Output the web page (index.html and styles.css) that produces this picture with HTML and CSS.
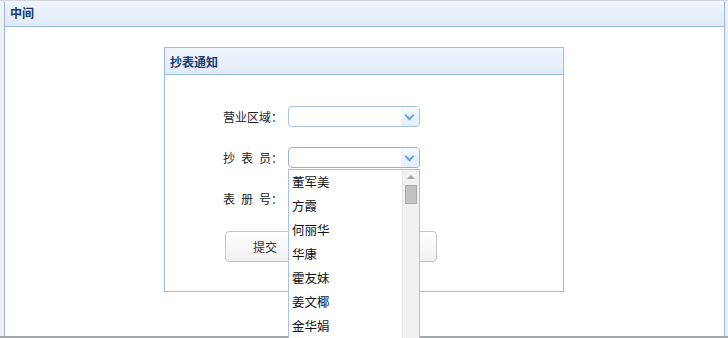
FILE: index.html
```html
<!DOCTYPE html>
<html lang="zh-CN">
  <head>
    <meta charset="UTF-8" />
    <title>中间 - 抄表通知</title>
    <link rel="stylesheet" href="styles.css">
  </head>
  <body>
    <div class="frame">
      <div class="panel outer-panel">
        <div class="panel-header">中间</div>
        <div class="panel-body">
          <div class="panel notice-panel">
            <div class="panel-header">抄表通知</div>
            <form class="notice-form">
              <div class="form-row">
                <label class="form-label">营业区域：</label>
                <div class="combo">
                  <span class="combo-trigger"></span>
                </div>
              </div>

              <div class="form-row">
                <label class="form-label"><span class="spread">抄表</span>员：</label>
                <div class="combo combo-open">
                  <span class="combo-trigger"></span>
                  <ul class="combo-list">
                    <li>董军美</li>
                    <li>方霞</li>
                    <li>何丽华</li>
                    <li>华康</li>
                    <li>霍友妹</li>
                    <li>姜文椰</li>
                    <li>金华娟</li>
                  </ul>
                  <div class="scrollbar">
                    <span class="scroll-up"></span>
                    <span class="scroll-thumb"></span>
                  </div>
                </div>
              </div>

              <div class="form-row">
                <label class="form-label"><span class="spread">表册</span>号：</label>
                <div class="combo">
                  <span class="combo-trigger"></span>
                </div>
              </div>

              <div class="form-buttons">
                <button type="button" class="btn">提交</button>
                <button type="button" class="btn">重置</button>
              </div>
            </form>
          </div>
        </div>
      </div>
    </div>
  </body>
</html>
```

FILE: styles.css
```css
* {
  margin: 0;
  padding: 0;
  box-sizing: border-box;
}

html,
body {
  height: 100%;
  overflow: hidden;
}

body {
  font-family: "Noto Sans CJK SC", "Liberation Sans", sans-serif;
  font-size: 12px;
  color: #222;
  background: #ffffff;
}

.frame {
  height: 100%;
  padding: 0 3px 0 4px;
  background: #eef0f3;
  border-top: 1px solid #d3d7dc;
  border-bottom: 2px solid #a4a8ad;
}

.panel {
  background: #ffffff;
  border: 1px solid #99bbe8;
}

.outer-panel {
  height: 100%;
  border-top: none;
  border-bottom: none;
}

.panel-header {
  height: 26px;
  line-height: 25px;
  padding-left: 5px;
  font-size: 12px;
  font-weight: 700;
  color: #163a75;
  background: linear-gradient(to bottom, #f0f5fc 0%, #e0eaf8 100%);
  border-bottom: 1px solid #99bbe8;
}

.outer-panel > .panel-header {
  height: 26px;
  line-height: 24px;
}

.panel-body {
  padding-top: 20px;
}

/* inner notice panel */
.notice-panel {
  width: 400px;
  margin-left: 159px;
}

.notice-panel > .panel-header {
  height: 27px;
  line-height: 27px;
}

.notice-form {
  height: 216px;
  padding-top: 31px;
}

.form-row {
  display: flex;
  align-items: center;
  height: 21px;
  margin-bottom: 20px;
}

.form-label {
  width: 123px;
  padding-right: 5px;
  text-align: right;
  font-size: 12px;
  color: #222;
}

.spread {
  letter-spacing: 6px;
}

.combo {
  position: relative;
  width: 132px;
  height: 21px;
  border: 1px solid #a5c2e2;
  border-radius: 4px;
  background: #ffffff;
}

.combo-trigger {
  position: absolute;
  top: 0;
  right: 0;
  width: 18px;
  height: 100%;
  border-radius: 0 3px 3px 0;
  background: linear-gradient(to bottom, #f4f8fd 0%, #e2edf9 100%);
}

.combo-trigger::after {
  content: "";
  position: absolute;
  left: 5px;
  top: 5px;
  width: 5px;
  height: 5px;
  border-right: 2px solid #6aa6dc;
  border-bottom: 2px solid #6aa6dc;
  transform: rotate(45deg);
}

.combo-open {
  border-color: #8fb3dd;
}

/* open dropdown */
.combo-list {
  position: absolute;
  top: 21px;
  left: -1px;
  width: 132px;
  height: 170px;
  list-style: none;
  background: #ffffff;
  border: 1px solid #a5c2e2;
  border-bottom: none;
  overflow: hidden;
  z-index: 5;
}

.combo-list li {
  height: 24px;
  line-height: 24px;
  padding-left: 3px;
  font-size: 12.5px;
  color: #111;
}

.scrollbar {
  position: absolute;
  top: 22px;
  right: 0;
  width: 17px;
  height: 169px;
  background: #f1f1f1;
  border-left: 1px solid #e6e6e6;
  z-index: 6;
}

.scroll-up {
  position: absolute;
  left: 4px;
  top: 5px;
  border-left: 4px solid transparent;
  border-right: 4px solid transparent;
  border-bottom: 4px solid #a3a3a3;
}

.scroll-thumb {
  position: absolute;
  left: 2px;
  top: 15px;
  width: 12px;
  height: 19px;
  background: #c2c2c2;
  border: 1px solid #a9a9a9;
}

/* buttons */
.form-buttons {
  display: flex;
  gap: 52px;
  padding-left: 60px;
  margin-top: 22px;
}

.btn {
  width: 80px;
  height: 31px;
  font-family: "Noto Sans CJK SC", "Liberation Sans", sans-serif;
  font-size: 12px;
  color: #333;
  background: linear-gradient(to bottom, #ffffff 0%, #f1f1f1 100%);
  border: 1px solid #c4c4c4;
  border-radius: 4px;
  cursor: pointer;
}
```
